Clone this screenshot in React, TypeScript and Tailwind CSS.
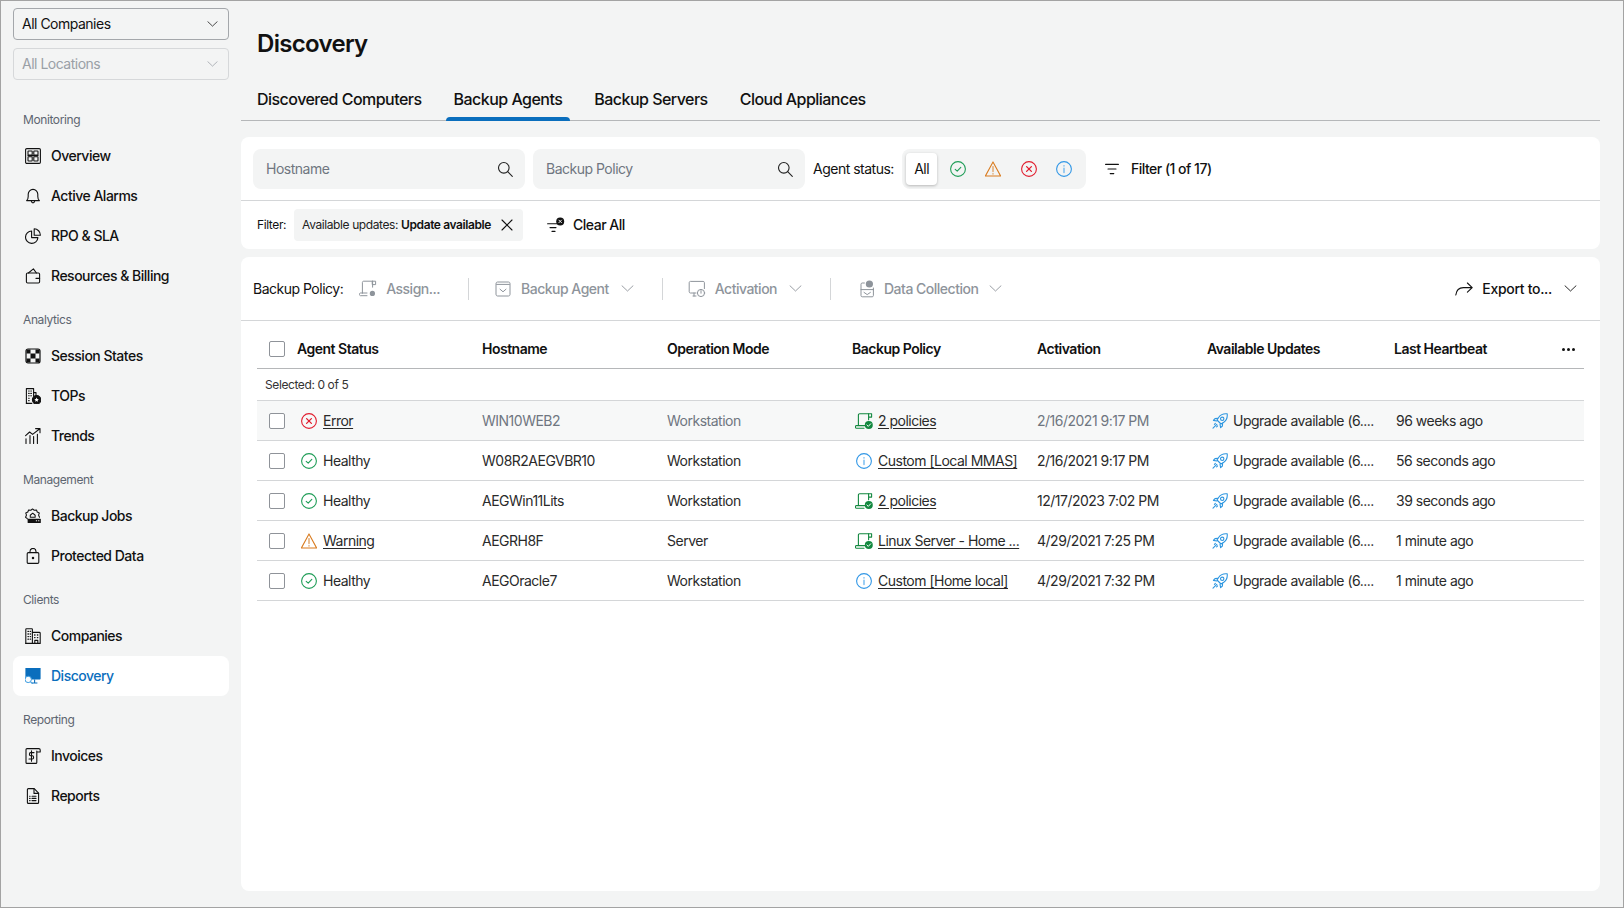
import React from "react";

type IconProps = { className?: string };

const line = {
  fill: "none",
  stroke: "currentColor",
  strokeWidth: 1.1,
  strokeLinecap: "round" as const,
  strokeLinejoin: "round" as const,
};

const Chevron = ({ className = "" }: IconProps) => (
  <svg width="13" height="7" viewBox="0 0 13 7" className={className} {...line} strokeWidth={0.9}>
    <path d="M1 .8 6.5 6 12 .8" />
  </svg>
);

const SearchIcon = () => (
  <svg width="16" height="16" viewBox="0 0 16 16" {...line} className="text-[#222]">
    <circle cx="6.8" cy="6.8" r="5.3" />
    <path d="m10.7 10.7 4.6 4.6" />
  </svg>
);

const Overview = () => (
  <svg width="16" height="16" viewBox="0 0 16 16" {...line}>
    <rect x="0.6" y="0.6" width="14.8" height="14.8" rx="1.2" />
    <rect x="3" y="3" width="4.2" height="4" rx="0.5" />
    <rect x="8.8" y="3" width="4.2" height="4" rx="0.5" />
    <rect x="3" y="8.8" width="4.2" height="4.2" rx="0.5" />
    <rect x="8.8" y="8.8" width="4.2" height="4.2" rx="0.5" />
    <path d="M3 7.6h10" strokeWidth="1.4" />
  </svg>
);

const Bell = () => (
  <svg width="16" height="16" viewBox="0 0 16 16" {...line}>
    <path d="M1.6 12.6c1.2-1 1.6-2.2 1.6-4.2V6.2a4.8 4.8 0 0 1 9.6 0v2.2c0 2 .4 3.2 1.6 4.2Z" />
    <path d="M6.3 13c.2 1.2 1 1.9 1.7 1.9s1.5-.7 1.7-1.9" />
  </svg>
);

const Pie = () => (
  <svg width="16" height="16" viewBox="0 0 16 16" {...line}>
    <path d="M6.6 3a6.2 6.2 0 1 0 6.3 6.6H6.6Z" />
    <path d="M9.2.8v6.4h6.2A6.4 6.4 0 0 0 9.2.8Z" />
  </svg>
);

const Wallet = () => (
  <svg width="16" height="16" viewBox="0 0 16 16" {...line}>
    <rect x="1.4" y="5" width="13.2" height="10" rx="1.2" />
    <path d="M3.4 5 8.4.9l3 4.1M11 10.4h3.6" />
  </svg>
);

const Session = () => (
  <svg width="16" height="16" viewBox="0 0 16 16">
    <rect x="1" y="1" width="14" height="14" rx="2" fill="none" stroke="currentColor" strokeWidth="1.2" />
    <path d="M1.5 1.5h4v4h-4zM5.5 5.5h5v5h-5zM1.5 10.5h4v4h-4zM10.5 1.5h4v4h-4zM10.5 10.5h4v4h-4z" fill="currentColor" />
  </svg>
);

const Tops = () => (
  <svg width="16" height="16" viewBox="0 0 16 16" {...line}>
    <path d="M1.4 15.4V.6h7.2v7.6" />
    <path d="M8.6 4.6h2.4v3M1.4 15.4h5.4" />
    <path d="M3.6 3h.6M5.8 3h.6M3.6 5.4h.6M5.8 5.4h.6M3.6 7.8h.6M5.8 7.8h.6M3.6 10.2h.6M3.6 12.6h.6" />
    <circle cx="11.6" cy="11.8" r="4.2" fill="currentColor" />
    <path d="m11.6 9.6.7 1.4 1.5.2-1.1 1 .3 1.5-1.4-.7-1.4.7.3-1.5-1.1-1 1.5-.2Z" fill="#fff" stroke="none" />
  </svg>
);

const Trends = () => (
  <svg width="16" height="16" viewBox="0 0 16 16" {...line}>
    <path d="m.6 7.6 4-3.6 3 2.4L14.8.8M10.6.6h4.4v4.2" />
    <path d="M1 15.4v-4.6M5 15.4V7.6M8.6 15.4V8.6M12.4 15.4V6.4" />
  </svg>
);

const BackupJobs = () => (
  <svg width="17" height="16" viewBox="0 0 17 16" {...line}>
    <path d="M2.4 10.6.6 9.4 1.6 7 .8 4.8 3 3.8 3.8 1.6l2.4.3L8 .5l1.8 1.4 2.4-.3.8 2.2 2.2 1-.8 2.2 1 2.4" />
    <path d="m5.6 7.2 2.6-2.2 2.6 2.2v2.2H5.6Z" />
    <rect x="2.8" y="10.8" width="14" height="4.6" rx="0.6" fill="currentColor" stroke="none" />
    <path d="M12 13.1h.4M14.4 13.1h.4" stroke="#fff" />
  </svg>
);

const Lock = () => (
  <svg width="16" height="16" viewBox="0 0 16 16" {...line}>
    <rect x="2.2" y="4.6" width="11.6" height="10.8" rx="1.2" />
    <path d="M5 4.6V3.4a3 3 0 0 1 6 0v1.2" />
    <circle cx="8" cy="10" r="0.7" fill="currentColor" />
  </svg>
);

const Companies = () => (
  <svg width="16" height="16" viewBox="0 0 16 16" {...line}>
    <path d="M.8 15.4V1.4C.8 1 1 .8 1.4.8h5.4c.4 0 .6.2.6.6v14" />
    <path d="M7.4 4.4h7c.5 0 .8.3.8.8v10.2H.8" />
    <path d="M3 3.4h.4M5.2 3.4h.4M3 6h.4M5.2 6h.4M3 8.6h.4M5.2 8.6h.4M3 11.2h.4M5.2 11.2h.4M9.6 7h.4M12.4 7h.4M9.6 9.6h.4M12.4 9.6h.4" strokeWidth="1.3" />
    <path d="M9.8 15.4v-3h3v3" />
  </svg>
);

const DiscoveryIcon = () => (
  <svg width="16" height="16" viewBox="0 0 16 16">
    <path d="M.4 0h15.2v10.4c0 .7-.4 1.2-1.1 1.2H.4Z" fill="#0a6ebd" />
    <path d="M9.6 11.6v3.2M6.8 15h5.6" stroke="#0a6ebd" strokeWidth="1.1" fill="none" />
    <circle cx="3.2" cy="11.4" r="3.2" fill="#f9fbfd" stroke="#3a9be0" strokeWidth="1" />
    <path d="m5.6 13.8 2 2" stroke="#3a9be0" strokeWidth="1.1" fill="none" />
  </svg>
);

const Invoice = () => (
  <svg width="16" height="16" viewBox="0 0 16 16" {...line}>
    <path d="M11.8 3v11.4c0 .6-.4 1-1 1H2c-.6 0-1-.4-1-1V1.6c0-.6.4-1 1-1h11.8c.8 0 1.4.6 1.4 1.3V4h-3.4" />
    <path d="M9 4.6H5.6c-1.6 0-1.6 3.2 0 3.2h1.8c1.6 0 1.6 3.2 0 3.2H4M6.5 2.8v10.4" />
  </svg>
);

const Report = () => (
  <svg width="16" height="16" viewBox="0 0 16 16" {...line}>
    <path d="M2.4 1.6c0-.6.4-1 1-1h5.8l4.4 4.6v9.2c0 .6-.4 1-1 1H3.4c-.6 0-1-.4-1-1Z" />
    <path d="M9 .8v4.6h4.6M7 8.2h4M7 10.4h4M7 12.6h4M4.6 8.2h.5M4.6 10.4h.5M4.6 12.6h.5" />
  </svg>
);

const Healthy = () => (
  <svg width="16" height="16" viewBox="0 0 16 16" fill="none" stroke="#1f9d57" strokeWidth="1.1" strokeLinecap="round" strokeLinejoin="round">
    <circle cx="8" cy="8" r="7.4" />
    <path d="m5.2 8.3 2 1.9 3.6-3.8" />
  </svg>
);

const ErrorIcon = () => (
  <svg width="16" height="16" viewBox="0 0 16 16" fill="none" stroke="#e11d2e" strokeWidth="1.1" strokeLinecap="round">
    <circle cx="8" cy="8" r="7.4" />
    <path d="m5.6 5.6 4.8 4.8m0-4.8-4.8 4.8" strokeWidth="1.3" />
  </svg>
);

const WarningIcon = () => (
  <svg width="16" height="16" viewBox="0 0 16 16" fill="none" stroke="#d97b1f" strokeWidth="1.1" strokeLinejoin="round" strokeLinecap="round">
    <path d="M8 .9 15.6 15H.4Z" />
    <path d="M8 5.6v5" stroke="#e0a468" strokeWidth="1.4" />
    <path d="M8 12.6v.4" stroke="#e0a468" strokeWidth="1.4" />
  </svg>
);

const InfoIcon = () => (
  <svg width="16" height="16" viewBox="0 0 16 16" fill="none" stroke="#3197e6" strokeWidth="1.1" strokeLinecap="round">
    <circle cx="8" cy="8" r="7.4" />
    <path d="M8 7.2v4.4M8 4.6v.4" stroke="#73b9ef" strokeWidth="1.4" />
  </svg>
);

const PolicyOk = () => (
  <svg width="18" height="16" viewBox="0 0 18 16" fill="none" stroke="#12883f" strokeWidth="1.1" strokeLinecap="round" strokeLinejoin="round">
    <path d="M3.4 12.4V1.9C3.4 1.2 4 .7 4.6.7h9" />
    <path d="M13.6.7h3v3.4h-3Zm0 0v6" />
    <path d="M3.4 12.6h7M3.4 12.6h-2c-.6 0-1 .5-1 1.2s.4 1.4 1 1.4H9" />
    <circle cx="13.8" cy="11.9" r="4" fill="#12883f" stroke="none" />
    <path d="m11.9 12 1.4 1.4 2.4-2.6" stroke="#fff" strokeWidth="1" />
  </svg>
);

const Rocket = () => (
  <svg width="16" height="16" viewBox="0 0 16 16" fill="none" stroke="#2d96e0" strokeWidth="1.1" strokeLinecap="round" strokeLinejoin="round">
    <path d="M15.2.8c-3.8-.4-6.6.8-8.4 3.4L5 7l4 4 2.8-1.8C14.4 7.4 15.6 4.6 15.2.8Z" />
    <circle cx="10.2" cy="5.8" r="1.7" />
    <path d="M5.6 5.4 3 5.6 1.4 7.4l3.4.6M10.6 10.4l-.2 2.6-1.8 1.6-.6-3.4" />
    <path d="M3.4 10.4l-1 1M4.8 11.4 1 15.2M5.6 12.8l-1 1" />
  </svg>
);

const NAV = [
  {
    title: "Monitoring",
    items: [
      { label: "Overview", icon: <Overview /> },
      { label: "Active Alarms", icon: <Bell /> },
      { label: "RPO & SLA", icon: <Pie /> },
      { label: "Resources & Billing", icon: <Wallet /> },
    ],
  },
  {
    title: "Analytics",
    items: [
      { label: "Session States", icon: <Session /> },
      { label: "TOPs", icon: <Tops /> },
      { label: "Trends", icon: <Trends /> },
    ],
  },
  {
    title: "Management",
    items: [
      { label: "Backup Jobs", icon: <BackupJobs /> },
      { label: "Protected Data", icon: <Lock /> },
    ],
  },
  {
    title: "Clients",
    items: [
      { label: "Companies", icon: <Companies /> },
      { label: "Discovery", icon: <DiscoveryIcon />, active: true },
    ],
  },
  {
    title: "Reporting",
    items: [
      { label: "Invoices", icon: <Invoice /> },
      { label: "Reports", icon: <Report /> },
    ],
  },
];

const ROWS = [
  { status: "Error", host: "WIN10WEB2", mode: "Workstation", policy: "2 policies", ok: true, date: "2/16/2021 9:17 PM", beat: "96 weeks ago", muted: true },
  { status: "Healthy", host: "W08R2AEGVBR10", mode: "Workstation", policy: "Custom [Local MMAS]", ok: false, date: "2/16/2021 9:17 PM", beat: "56 seconds ago" },
  { status: "Healthy", host: "AEGWin11Lits", mode: "Workstation", policy: "2 policies", ok: true, date: "12/17/2023 7:02 PM", beat: "39 seconds ago" },
  { status: "Warning", host: "AEGRH8F", mode: "Server", policy: "Linux Server - Home ...", ok: true, date: "4/29/2021 7:25 PM", beat: "1 minute ago" },
  { status: "Healthy", host: "AEGOracle7", mode: "Workstation", policy: "Custom [Home local]", ok: false, date: "4/29/2021 7:32 PM", beat: "1 minute ago" },
];

const GRID = "grid grid-cols-[40px_185px_185px_185px_185px_170px_187px_1fr] items-center";

const Checkbox = () => (
  <span className="ml-3 block h-4 w-4 rounded-[2px] border border-[#8f9399] bg-white" />
);

const SideSelect = ({ label, disabled }: { label: string; disabled?: boolean }) => (
  <div
    className={
      disabled
        ? "flex h-8 items-center justify-between rounded border border-[#d6d8da] pr-[10px] pl-2 text-[#9aa0a6]"
        : "flex h-8 items-center justify-between rounded border border-[#a4a7ab] pr-[10px] pl-2 text-[#111]"
    }
  >
    <span>{label}</span>
    <Chevron className="h-[6px] w-[11px]" />
  </div>
);

const Sidebar = () => (
  <aside className="w-[240px] shrink-0 pt-[7px] pr-3 pl-3 text-sm">
    <div className="flex flex-col gap-2">
      <SideSelect label="All Companies" />
      <SideSelect label="All Locations" disabled />
    </div>
    <nav className="mt-6 flex flex-col gap-2">
      {NAV.map((group) => (
        <div key={group.title}>
          <div className="flex h-8 items-center pl-[10px] text-xs tracking-[-0.4px] text-[#5d6570]">{group.title}</div>
          {group.items.map((item) => (
            <div
              key={item.label}
              className={
                item.active
                  ? "flex h-10 items-center gap-[10px] rounded-lg bg-white px-3 font-medium text-[#0a6ebd]"
                  : "flex h-10 items-center gap-[10px] px-3 font-medium text-[#111]"
              }
            >
              <span className="flex h-4 w-4 shrink-0 items-center justify-start">{item.icon}</span>
              {item.label}
            </div>
          ))}
        </div>
      ))}
    </nav>
  </aside>
);

const SearchBox = ({ placeholder }: { placeholder: string }) => (
  <div className="flex h-10 w-[272px] items-center justify-between rounded-lg bg-[#f3f4f4] pr-3 pl-[13px] text-sm text-[#6f7680]">
    <span>{placeholder}</span>
    <SearchIcon />
  </div>
);

const ToolSep = () => <span className="h-[22px] w-px bg-[#d4d6d8]" />;

const ToolIcon = ({ d, children }: { d: string; children?: React.ReactNode }) => (
  <svg width="18" height="18" viewBox="0 0 18 18" {...line} strokeWidth={1} className="shrink-0">
    <path d={d} />
    {children}
  </svg>
);

export default function App() {
  return (
    <div className="flex h-[908px] w-[1624px] border border-[#a3a3a3] bg-[#f3f4f4] font-['Inter',sans-serif] tracking-[-0.5px] text-[#111]">
      <Sidebar />
      <main className="flex min-w-0 flex-1 flex-col pr-[23px] pb-4">
        <h1 className="mt-[27px] h-8 pl-4 text-2xl leading-8 font-semibold tracking-[-0.7px] text-[#111]">Discovery</h1>
        <div className="mt-5 flex h-[41px] gap-4 border-b border-[#b5b7b9] pl-2">
          {["Discovered Computers", "Backup Agents", "Backup Servers", "Cloud Appliances"].map((tab) => (
            <div key={tab} className="relative flex h-10 items-center px-2 pb-[2px] text-base font-medium tracking-[-0.53px]">
              {tab}
              {tab === "Backup Agents" && (
                <span className="absolute right-0 -bottom-px left-0 h-1 rounded-t bg-[#0a6ebd]" />
              )}
            </div>
          ))}
        </div>

        <section className="mt-4 h-[112px] shrink-0 rounded-lg bg-white text-sm">
          <div className="flex h-[64px] items-start border-b border-[#d4d6d8] pt-3 pl-3">
            <div className="flex gap-2">
              <SearchBox placeholder="Hostname" />
              <SearchBox placeholder="Backup Policy" />
            </div>
            <span className="ml-2 flex h-10 items-center">Agent status:</span>
            <div className="ml-2 flex h-10 w-[184px] items-center rounded-lg bg-[#f3f4f4] px-1">
              <span className="flex h-8 w-8 items-center justify-center rounded bg-white shadow-[0_1px_3px_rgba(0,0,0,0.25)]">
                All
              </span>
              <span className="ml-[3px] flex w-9 justify-center"><Healthy /></span>
              <span className="flex w-9 justify-center"><WarningIcon /></span>
              <span className="flex w-9 justify-center"><ErrorIcon /></span>
              <span className="flex w-9 justify-center"><InfoIcon /></span>
            </div>
            <div className="ml-[19px] flex h-10 items-center gap-3 font-medium">
              <svg width="14" height="12" viewBox="0 0 14 12" {...line}>
                <path d="M.6 1.4h12.8M3 6h8M5.2 10.6h3.6" />
              </svg>
              Filter (1 of 17)
            </div>
          </div>
          <div className="flex h-12 items-center pl-4">
            <span className="text-xs tracking-[-0.4px]">Filter:</span>
            <div className="ml-2 flex h-8 w-[229px] items-center justify-between rounded bg-[#f3f4f4] pr-[10px] pl-2 text-xs tracking-[-0.4px] whitespace-nowrap">
              <span>
                <span className="text-[#222]">Available updates:&nbsp;</span>
                <span className="font-semibold">Update available</span>
              </span>
              <svg width="12" height="12" viewBox="0 0 12 12" {...line}>
                <path d="m1 1 10 10M11 1 1 11" />
              </svg>
            </div>
            <div className="ml-6 flex items-center gap-2 font-medium">
              <svg width="18" height="16" viewBox="0 0 18 16" {...line}>
                <path d="M.6 6.8h9.6M3 10.6h6M5 14.4h3" />
                <circle cx="13.2" cy="4.4" r="4" fill="currentColor" stroke="none" />
                <path d="m11.9 3.1 2.6 2.6m0-2.6-2.6 2.6" stroke="#fff" strokeWidth="0.9" />
              </svg>
              Clear All
            </div>
          </div>
        </section>

        <section className="mt-2 flex min-h-0 flex-1 flex-col rounded-lg bg-white text-sm">
          <div className="flex h-[64px] shrink-0 items-center border-b border-[#d4d6d8] pr-[23px] pl-3">
            <span>Backup Policy:</span>
            <div className="ml-4 flex items-center gap-[9px] font-medium text-[#8e949b]">
              <ToolIcon d="M3.4 13V2.4c0-.7.5-1.2 1.2-1.2h9m0 0h3v3.4h-3Zm0 0v6M3.4 13H8M3.4 13h-2C.8 13 .4 13.6.4 14.3s.4 1.4 1 1.4H8">
                <circle cx="13.4" cy="13.4" r="2.6" fill="currentColor" stroke="none" />
              </ToolIcon>
              Assign...
            </div>
            <span className="ml-7 mr-[25px] flex items-center"><ToolSep /></span>
            <div className="flex items-center gap-[9px] font-medium text-[#8e949b]">
              <ToolIcon d="M2 3.6c0-1 .6-1.6 1.6-1.6h10.8c1 0 1.6.6 1.6 1.6v10.8c0 1-.6 1.6-1.6 1.6H3.6c-1 0-1.6-.6-1.6-1.6ZM2.6 4.4h12.8M6 9.2l3 2.6 3-2.6" />
              Backup Agent
              <Chevron className="ml-[3px]" />
            </div>
            <span className="ml-7 mr-[25px] flex items-center"><ToolSep /></span>
            <div className="flex items-center gap-[9px] font-medium text-[#8e949b]">
              <ToolIcon d="M8 13H2.4c-.7 0-1.2-.5-1.2-1.2V2.6c0-.7.5-1.2 1.2-1.2h12.8c.7 0 1.2.5 1.2 1.2v6M5 16h3M6 13v3">
                <circle cx="13" cy="13" r="3.6" />
                <path d="M13 10.6v2.6" />
              </ToolIcon>
              Activation
              <Chevron className="ml-[3px]" />
            </div>
            <span className="ml-7 mr-7 flex items-center"><ToolSep /></span>
            <div className="flex items-center gap-[7px] font-medium text-[#8e949b]">
              <ToolIcon d="M5.4 3H3.2C2.5 3 2 3.5 2 4.2v11.4c0 .7.5 1.2 1.2 1.2h10c.7 0 1.2-.5 1.2-1.2V8M2 9.6h12.4M5 12.4l3.2 2.2 3.2-2.2">
                <circle cx="10.4" cy="4" r="3.6" fill="currentColor" stroke="none" />
              </ToolIcon>
              Data Collection
              <Chevron className="ml-1" />
            </div>
            <div className="ml-auto flex items-center gap-[9px] font-medium tracking-[-0.3px]">
              <svg width="18" height="14" viewBox="0 0 18 14" {...line}>
                <path d="M.8 13c.6-5 3-7.4 7.6-7.4h8.6M12.4 1l4.8 4.6-4.8 4.6" />
              </svg>
              Export to...
              <Chevron className="ml-[3px]" />
            </div>
          </div>

          <div className="mx-4 flex flex-col">
            <div className={`${GRID} h-[48px] border-b border-[#b5b7b9] pt-[9px] font-semibold`}>
              <Checkbox />
              <span>Agent Status</span>
              <span>Hostname</span>
              <span>Operation Mode</span>
              <span>Backup Policy</span>
              <span>Activation</span>
              <span>Available Updates</span>
              <div className="flex items-center justify-between pr-[9px]">
                <span>Last Heartbeat</span>
                <span className="flex gap-[2px]">
                  <i className="h-[3px] w-[3px] rounded-full bg-[#111]" />
                  <i className="h-[3px] w-[3px] rounded-full bg-[#111]" />
                  <i className="h-[3px] w-[3px] rounded-full bg-[#111]" />
                </span>
              </div>
            </div>
            <div className="flex h-[32px] items-center border-b border-[#d4d6d8] pl-2 text-xs tracking-[-0.4px] text-[#333]">
              Selected: 0 of 5
            </div>
            {ROWS.map((row) => {
              const tone = row.muted ? "text-[#6f7680]" : "text-[#2a2a2a]";
              return (
                <div
                  key={row.host}
                  className={`${GRID} h-10 border-b border-[#d4d6d8] text-[#2a2a2a] ${row.muted ? "bg-[#f7f8f8]" : ""}`}
                >
                  <Checkbox />
                  <div className="flex items-center gap-[6px] pl-1">
                    {row.status === "Error" && <ErrorIcon />}
                    {row.status === "Healthy" && <Healthy />}
                    {row.status === "Warning" && <WarningIcon />}
                    <span className={row.status === "Healthy" ? "" : "underline underline-offset-2"}>{row.status}</span>
                  </div>
                  <span className={tone}>{row.host}</span>
                  <span className={tone}>{row.mode}</span>
                  <div className="flex items-center gap-[5px] pl-[3px]">
                    {row.ok ? <PolicyOk /> : <span className="ml-px mr-px"><InfoIcon /></span>}
                    <span className="underline underline-offset-2">{row.policy}</span>
                  </div>
                  <span className={tone}>{row.date}</span>
                  <div className="flex items-center gap-[5px] pl-[5px]">
                    <Rocket />
                    <span>Upgrade available (6....</span>
                  </div>
                  <span className="pl-[2px]">{row.beat}</span>
                </div>
              );
            })}
          </div>
        </section>
      </main>
    </div>
  );
}
